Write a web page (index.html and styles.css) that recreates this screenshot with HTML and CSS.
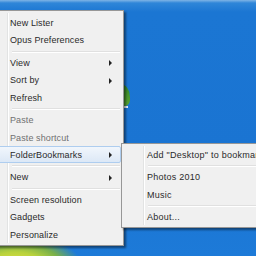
FILE: index.html
```html
<!DOCTYPE html>
<html>
<head>
<meta charset="utf-8">
<link rel="stylesheet" href="styles.css">
</head>
<body>
<div class="desktop">
  <div class="leaf"></div>
  <div class="spark"></div>
  <div class="flare"></div>
  <div class="menu main">
    <div class="item">New Lister</div>
    <div class="item">Opus Preferences</div>
    <div class="sep"></div>
    <div class="item sub">View</div>
    <div class="item sub">Sort by</div>
    <div class="item">Refresh</div>
    <div class="sep"></div>
    <div class="item dis">Paste</div>
    <div class="item dis">Paste shortcut</div>
    <div class="item sub hot">FolderBookmarks</div>
    <div class="sep"></div>
    <div class="item sub">New</div>
    <div class="sep"></div>
    <div class="item">Screen resolution</div>
    <div class="item">Gadgets</div>
    <div class="item">Personalize</div>
  </div>
  <div class="menu submenu">
    <div class="item">Add "Desktop" to bookmarks</div>
    <div class="sep"></div>
    <div class="item">Photos 2010</div>
    <div class="item">Music</div>
    <div class="sep"></div>
    <div class="item">About...</div>
  </div>
</div>
</body>
</html>
```
FILE: styles.css
```css
html, body {
  margin: 0;
  padding: 0;
  width: 256px;
  height: 256px;
  overflow: hidden;
}
.desktop {
  position: relative;
  width: 256px;
  height: 256px;
  overflow: hidden;
  background: linear-gradient(180deg, #7fb4e6 0px, #2f86d8 3px, #1b76d3 12px, #1a74d2 60%, #1d7ad8 100%);
  font-family: "Liberation Sans", Arial, sans-serif;
  font-size: 9px;
}
.leaf {
  position: absolute;
  left: 114px;
  top: 84px;
  width: 16px;
  height: 22px;
  background: linear-gradient(160deg, #2a7f28, #5aa632);
  border-radius: 0 60% 30% 60%;
}
.spark {
  position: absolute;
  left: 124px;
  top: 106px;
  width: 4px;
  height: 2px;
  background: #e8f2ff;
}
.flare {
  position: absolute;
  left: -20px;
  top: 236px;
  width: 100px;
  height: 40px;
  background: radial-gradient(ellipse at 35% 70%, #e4e040 0%, #b8d23c 30%, #78b04a 50%, rgba(27,118,211,0) 72%);
}
.menu {
  position: absolute;
  box-sizing: border-box;
  background: #f0f0f0;
  border: 1px solid #979797;
  padding: 2px;
  box-shadow: 2px 2px 2px rgba(0,0,0,0.45);
  display: flex;
  flex-direction: column;
}
.menu::before {
  content: "";
  position: absolute;
  top: 2px;
  bottom: 2px;
  width: 1px;
  background: #e2e3e3;
  border-right: 1px solid #ffffff;
}
.main {
  left: -15px;
  top: 10px;
  width: 139px;
  height: 236px;
  padding-top: 3px;
}
.main::before { left: 21px; }
.submenu {
  left: 121px;
  top: 143px;
  width: 150px;
  height: 85px;
  padding-top: 2px;
}
.submenu::before { left: 21px; }
.item {
  position: relative;
  height: 17.4px;
  line-height: 17.4px;
  padding-left: 21px;
  color: #2a2a2a;
  white-space: nowrap;
  border: 1px solid transparent;
  box-sizing: border-box;
  border-radius: 2px;
  letter-spacing: 0.1px;
}
.submenu .item { padding-left: 22px; letter-spacing: 0.25px; }
.item.dis { color: #707070; }
.item.sub::after {
  content: "";
  position: absolute;
  right: 8px;
  top: 5.5px;
  border-left: 3px solid #222;
  border-top: 3px solid transparent;
  border-bottom: 3px solid transparent;
}
.item.hot {
  background: linear-gradient(180deg, #f1f6fc, #dce8f6);
  border-color: #aecdef;
}
.sep {
  height: 5.6px;
  position: relative;
}
.sep::after {
  content: "";
  position: absolute;
  left: 24px;
  right: 1px;
  top: 2px;
  height: 1px;
  background: #e0e0e0;
  border-bottom: 1px solid #ffffff;
}
```
